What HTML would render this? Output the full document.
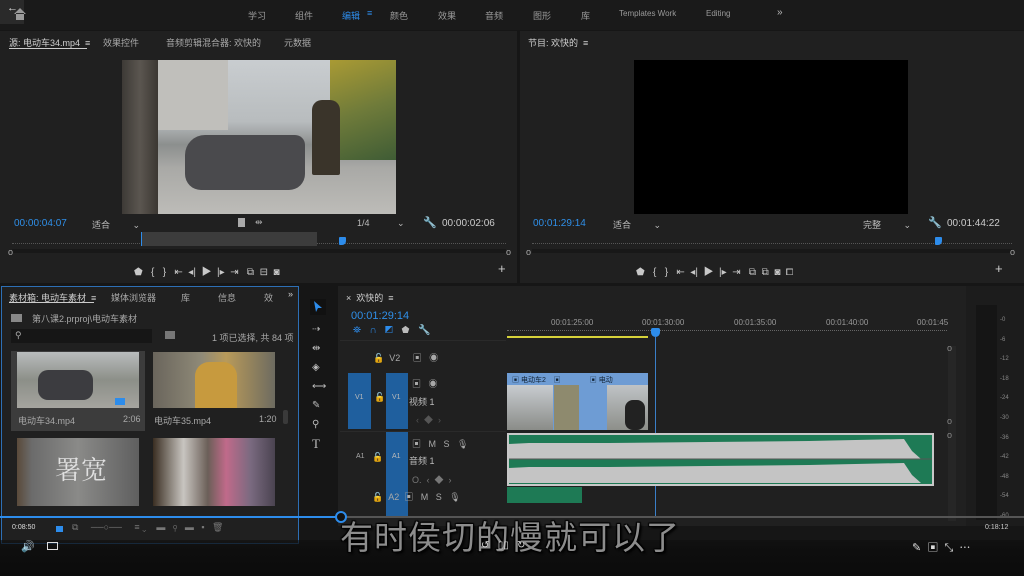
<!DOCTYPE html>
<html><head><meta charset="utf-8"><style>
*{margin:0;padding:0;box-sizing:border-box}
body{width:1024px;height:576px;overflow:hidden;background:#161616;font-family:"Liberation Sans","Noto Sans CJK SC",sans-serif;color:#a8a8a8;position:relative;font-size:9px}
.a{position:absolute}
.t{position:absolute;white-space:nowrap}
.panel{position:absolute;background:#202020}
.tc{color:#2f8fe8;font-size:10px}
</style></head><body>
<!-- top bar -->
<div class="a" style="left:0;top:0;width:1024px;height:30px;background:#1a1a1a"></div>
<div class="a" style="left:0;top:0;width:24px;height:24px;background:#2a2a2a"></div>
<div class="t" style="left:7px;top:2px;color:#ddd;font-size:11px">←</div>
<svg class="a" style="left:12px;top:7px" width="16" height="14"><path d="M2 7 L8 1 L14 7 M4 6 V13 H12 V6" fill="#9a9a9a"/></svg>
<div class="t" style="left:248px;top:9px;color:#9a9a9a">学习</div>
<div class="t" style="left:295px;top:9px;color:#9a9a9a">组件</div>
<div class="t" style="left:342px;top:9px;color:#2d8ceb">编辑</div>
<div class="t" style="left:367px;top:8px;color:#2d8ceb">≡</div>
<div class="t" style="left:390px;top:9px;color:#9a9a9a">颜色</div>
<div class="t" style="left:438px;top:9px;color:#9a9a9a">效果</div>
<div class="t" style="left:485px;top:9px;color:#9a9a9a">音频</div>
<div class="t" style="left:533px;top:9px;color:#9a9a9a">图形</div>
<div class="t" style="left:581px;top:9px;color:#9a9a9a">库</div>
<div class="t" style="left:619px;top:9px;color:#9a9a9a;font-size:8px">Templates Work</div>
<div class="t" style="left:706px;top:9px;color:#9a9a9a;font-size:8px">Editing</div>
<div class="t" style="left:777px;top:7px;color:#bbb;font-size:10px">»</div>

<!-- source panel -->
<div class="panel" style="left:0;top:31px;width:517px;height:252px"></div>
<div class="t" style="left:9px;top:36px;color:#d0d0d0">源: 电动车34.mp4 &nbsp;≡</div>
<div class="a" style="left:9px;top:48px;width:78px;height:1px;background:#ccc"></div>
<div class="t" style="left:103px;top:36px">效果控件</div>
<div class="t" style="left:166px;top:36px">音频剪辑混合器: 欢快的</div>
<div class="t" style="left:284px;top:36px">元数据</div>
<div class="a" style="left:122px;top:60px;width:274px;height:154px;background:linear-gradient(180deg,#c9cdd0 0%,#b8bcbe 40%,#8c8f8e 55%,#a9a9a6 70%,#bdbcb8 100%)"></div>
<div class="a" style="left:122px;top:60px;width:36px;height:154px;background:linear-gradient(90deg,#3d3a36,#5b5650,#3b3732)"></div>
<div class="a" style="left:158px;top:60px;width:70px;height:70px;background:#c0bfbb"></div>
<div class="a" style="left:330px;top:60px;width:66px;height:100px;background:linear-gradient(160deg,#a99a34,#6f7b3a,#3f5c35)"></div>
<div class="a" style="left:185px;top:135px;width:120px;height:55px;background:#4a4a4d;border-radius:20px 10px 16px 16px"></div>
<div class="a" style="left:312px;top:100px;width:28px;height:75px;background:#3a342a;border-radius:10px 10px 2px 2px"></div>
<div class="t tc" style="left:14px;top:218px">00:00:04:07</div>
<div class="t" style="left:92px;top:218px;color:#bbb">适合 &nbsp; &nbsp; &nbsp; &nbsp; ⌄</div>
<div class="a" style="left:238px;top:218px;width:7px;height:9px;background:#aaa"></div>
<div class="t" style="left:255px;top:217px">⇹</div>
<div class="t" style="left:357px;top:218px;color:#bbb">1/4 &nbsp; &nbsp; &nbsp; &nbsp; &nbsp; ⌄</div>
<div class="t" style="left:423px;top:216px;color:#ddd;font-size:11px">🔧</div>
<div class="t" style="left:442px;top:218px;color:#ccc;font-size:10px">00:00:02:06</div>
<div class="a" style="left:12px;top:243px;width:494px;height:1px;border-top:1px dotted #555"></div>
<div class="a" style="left:141px;top:232px;width:176px;height:14px;background:#3c3c3c;border-left:1px solid #2d8ceb"></div>
<div class="a" style="left:339px;top:237px;width:7px;height:8px;background:#2d8ceb;border-radius:1px 1px 4px 1px"></div>
<div class="a" style="left:12px;top:249px;width:494px;height:4px;background:#181818"></div>
<div class="t" style="left:8px;top:247px">o</div><div class="t" style="left:506px;top:247px">o</div>
<div class="t" style="left:134px;top:263px;color:#c8c8c8;font-size:10px">⬟ &nbsp; { &nbsp; } &nbsp; ⇤ &nbsp;◂| &nbsp;▶ &nbsp;|▸ &nbsp;⇥ &nbsp; ⧉ &nbsp;⊟ &nbsp;◙</div>
<div class="t" style="left:498px;top:261px;color:#ccc;font-size:13px">+</div>

<!-- program panel -->
<div class="panel" style="left:520px;top:31px;width:504px;height:252px"></div>
<div class="t" style="left:528px;top:36px;color:#d0d0d0">节目: 欢快的 &nbsp;≡</div>
<div class="a" style="left:634px;top:60px;width:274px;height:154px;background:#000"></div>
<div class="t tc" style="left:533px;top:218px">00:01:29:14</div>
<div class="t" style="left:613px;top:218px;color:#bbb">适合 &nbsp; &nbsp; &nbsp; &nbsp; ⌄</div>
<div class="t" style="left:863px;top:218px;color:#bbb">完整 &nbsp; &nbsp; &nbsp; &nbsp; ⌄</div>
<div class="t" style="left:928px;top:216px;color:#ddd;font-size:11px">🔧</div>
<div class="t" style="left:947px;top:218px;color:#ccc;font-size:10px">00:01:44:22</div>
<div class="a" style="left:532px;top:243px;width:480px;height:1px;border-top:1px dotted #555"></div>
<div class="a" style="left:935px;top:237px;width:7px;height:8px;background:#2d8ceb;border-radius:1px 1px 4px 1px"></div>
<div class="a" style="left:532px;top:249px;width:480px;height:4px;background:#181818"></div>
<div class="t" style="left:526px;top:247px">o</div><div class="t" style="left:1010px;top:247px">o</div>
<div class="t" style="left:636px;top:263px;color:#c8c8c8;font-size:10px">⬟ &nbsp; { &nbsp; } &nbsp; ⇤ &nbsp;◂| &nbsp;▶ &nbsp;|▸ &nbsp;⇥ &nbsp; ⧉ &nbsp;⧉ &nbsp;◙ &nbsp;⧠</div>
<div class="t" style="left:995px;top:261px;color:#ccc;font-size:13px">+</div>
<div class="t" style="left:1012px;top:280px;color:#ddd;font-size:14px">›</div>

<!-- project panel -->
<div class="panel" style="left:1px;top:286px;width:298px;height:258px;border:1px solid #2d6fb5"></div>
<div class="t" style="left:9px;top:291px;color:#d0d0d0">素材箱: 电动车素材 &nbsp;≡</div>
<div class="a" style="left:9px;top:302px;width:85px;height:1px;background:#ccc"></div>
<div class="t" style="left:111px;top:291px">媒体浏览器</div>
<div class="t" style="left:181px;top:291px">库</div>
<div class="t" style="left:218px;top:291px">信息</div>
<div class="t" style="left:264px;top:291px">效</div>
<div class="t" style="left:288px;top:289px;color:#ccc">»</div>
<div class="a" style="left:11px;top:314px;width:11px;height:8px;background:#888"></div>
<div class="t" style="left:32px;top:312px">第八课2.prproj\电动车素材</div>
<div class="a" style="left:11px;top:329px;width:141px;height:14px;background:#161616"></div>
<div class="t" style="left:15px;top:330px;color:#aaa">⚲</div>
<div class="a" style="left:165px;top:331px;width:10px;height:8px;background:#777"></div>
<div class="t" style="left:212px;top:331px">1 项已选择, 共 84 项</div>
<div class="a" style="left:11px;top:351px;width:134px;height:80px;background:#3c3c3c"></div>
<div class="a" style="left:17px;top:352px;width:122px;height:56px;background:linear-gradient(180deg,#b9bcbd,#8c8f88 50%,#a5a49f)"></div>
<div class="a" style="left:38px;top:370px;width:55px;height:30px;background:#3c3c40;border-radius:10px"></div>
<div class="a" style="left:115px;top:398px;width:10px;height:7px;background:#2d8ceb"></div>
<div class="t" style="left:18px;top:414px">电动车34.mp4</div><div class="t" style="left:123px;top:414px">2:06</div>
<div class="a" style="left:153px;top:352px;width:122px;height:56px;background:linear-gradient(90deg,#6a655c,#8f8a78 40%,#b89a5a 60%,#6d6b60)"></div>
<div class="a" style="left:195px;top:362px;width:42px;height:46px;background:#c79a3e;border-radius:14px 14px 0 0"></div>
<div class="t" style="left:154px;top:414px">电动车35.mp4</div><div class="t" style="left:259px;top:414px">1:20</div>
<div class="a" style="left:283px;top:410px;width:5px;height:14px;background:#3a3a3a;border-radius:2px"></div>
<div class="a" style="left:17px;top:438px;width:122px;height:68px;background:linear-gradient(90deg,#5a4a3a 0,#6b6b6b 12%,#8a8a88 50%,#5f5f5f)"></div>
<div class="t" style="left:55px;top:450px;font-size:26px;color:#e0e0e0;font-family:'Noto Serif CJK SC',serif">署宽</div>
<div class="a" style="left:153px;top:438px;width:122px;height:68px;background:linear-gradient(90deg,#3a2e22,#c8c5c0 25%,#6b5f58 45%,#c06a8a 60%,#7a6a80 80%,#4a4350)"></div>
<div class="t" style="left:12px;top:524px;color:#ddd;font-size:7px">0:08:50</div>
<div class="a" style="left:56px;top:526px;width:7px;height:6px;background:#2d8ceb"></div>
<div class="t" style="left:72px;top:522px;color:#777">⧉ &nbsp; &nbsp; ──○── &nbsp; &nbsp; ≡ ⌄ &nbsp; &nbsp;▬ &nbsp; ⚲ &nbsp; ▬ &nbsp; ▪ &nbsp; 🗑</div>

<!-- tools -->
<div class="a" style="left:310px;top:299px;width:16px;height:16px;background:#111"></div>
<svg class="a" style="left:313px;top:301px" width="10" height="12"><path d="M1 0 L9 7 L5 7 L3 11 Z" fill="#2d8ceb"/></svg>
<div class="t" style="left:312px;top:320px;color:#bbb;font-size:10px;line-height:19px">⇢<br>⇹<br>◈<br>⟷<br>✎<br>⚲<br><span style="font-family:'Liberation Serif';font-size:13px">T</span></div>

<!-- timeline -->
<div class="panel" style="left:338px;top:286px;width:628px;height:240px"></div>
<div class="t" style="left:346px;top:291px;color:#d0d0d0">× &nbsp;欢快的 &nbsp;≡</div>
<div class="t tc" style="left:351px;top:310px;font-size:11px">00:01:29:14</div>
<div class="t" style="left:353px;top:325px;color:#2d8ceb;font-size:10px">⛯ &nbsp; ∩ &nbsp; ◩ &nbsp; <span style="color:#bbb">⬟ &nbsp; 🔧</span></div>
<div class="t" style="left:551px;top:318px;color:#999;font-size:8px">00:01:25:00</div>
<div class="t" style="left:642px;top:318px;color:#999;font-size:8px">00:01:30:00</div>
<div class="t" style="left:734px;top:318px;color:#999;font-size:8px">00:01:35:00</div>
<div class="t" style="left:826px;top:318px;color:#999;font-size:8px">00:01:40:00</div>
<div class="t" style="left:917px;top:318px;color:#999;font-size:8px">00:01:45</div>
<div class="a" style="left:507px;top:330px;width:440px;height:3px;border-top:1px dotted #666"></div>
<div class="a" style="left:507px;top:336px;width:141px;height:2px;background:#d6d23a"></div>
<div class="a" style="left:651px;top:328px;width:9px;height:9px;background:#2d8ceb;border-radius:2px 2px 5px 5px"></div>
<div class="a" style="left:655px;top:336px;width:1px;height:182px;background:#3a7fc8"></div>
<div class="a" style="left:340px;top:340px;width:166px;height:1px;background:#2a2a2a"></div>
<div class="t" style="left:373px;top:351px">🔓 &nbsp;V2 &nbsp; &nbsp; ▣ &nbsp; ◉</div>
<div class="a" style="left:348px;top:373px;width:23px;height:56px;background:#1f5f9e"></div>
<div class="t" style="left:355px;top:394px;color:#bbb;font-size:7px">V1</div>
<div class="a" style="left:386px;top:373px;width:22px;height:56px;background:#1f5f9e"></div>
<div class="t" style="left:392px;top:394px;color:#bbb;font-size:7px">V1</div>
<div class="t" style="left:374px;top:392px">🔓</div>
<div class="t" style="left:412px;top:377px">▣ &nbsp; ◉</div>
<div class="t" style="left:409px;top:395px;color:#bbb">视频 1</div>
<div class="t" style="left:416px;top:413px;color:#555">‹ &nbsp;◆ &nbsp;›</div>
<div class="a" style="left:507px;top:373px;width:141px;height:57px;background:#6e9cd4"></div>
<div class="t" style="left:512px;top:375px;color:#123;font-size:7px">▣ 电动车2 &nbsp; &nbsp;▣ &nbsp; &nbsp; &nbsp; &nbsp; &nbsp; &nbsp; &nbsp; ▣ 电动</div>
<div class="a" style="left:507px;top:385px;width:46px;height:45px;background:linear-gradient(180deg,#c8ccd0,#8a8c88)"></div>
<div class="a" style="left:554px;top:385px;width:25px;height:45px;background:#8e8a6e"></div>
<div class="a" style="left:607px;top:385px;width:41px;height:45px;background:linear-gradient(180deg,#bfc3c6,#8d8f8a)"></div>
<div class="a" style="left:625px;top:400px;width:20px;height:30px;background:#222;border-radius:8px"></div>
<div class="a" style="left:340px;top:431px;width:166px;height:1px;background:#2a2a2a"></div>
<div class="a" style="left:386px;top:432px;width:22px;height:84px;background:#1f5f9e"></div>
<div class="t" style="left:392px;top:453px;color:#bbb;font-size:7px">A1</div>
<div class="t" style="left:356px;top:453px;font-size:7px">A1</div>
<div class="t" style="left:372px;top:452px">🔓</div>
<div class="t" style="left:412px;top:437px">▣ &nbsp; M &nbsp; S &nbsp; 🎙</div>
<div class="t" style="left:409px;top:454px;color:#bbb">音频 1</div>
<div class="t" style="left:412px;top:473px;color:#777">O. &nbsp;‹ &nbsp;◆ &nbsp;›</div>
<div class="t" style="left:372px;top:490px">🔓 &nbsp;A2 &nbsp;▣ &nbsp; M &nbsp; S &nbsp; 🎙</div>
<div class="a" style="left:507px;top:433px;width:427px;height:53px;background:#1e7a55;border:2px solid #c8c8c8"></div>
<svg class="a" style="left:509px;top:435px" width="423" height="49"><path d="M0 24 L0 9 L20 8 L100 8 L200 7 L300 6 L395 4 L403 16 L412 24 Z M0 48 L0 33 L20 32 L100 32 L200 31 L300 30 L395 28 L403 40 L412 48 Z" fill="#c4c4c4"/><line x1="0" y1="24" x2="423" y2="24" stroke="#555"/></svg>
<div class="a" style="left:507px;top:487px;width:75px;height:16px;background:#1e7a55"></div>
<div class="a" style="left:948px;top:346px;width:8px;height:175px;background:#262626"></div>
<div class="t" style="left:947px;top:343px;color:#888">o</div>
<div class="t" style="left:947px;top:416px;color:#888">o</div>
<div class="t" style="left:947px;top:430px;color:#888">o</div>

<!-- meters -->
<div class="a" style="left:966px;top:286px;width:58px;height:240px;background:#1c1c1c"></div>
<div class="a" style="left:976px;top:305px;width:21px;height:215px;background:#151515"></div>
<div class="t" style="left:1000px;top:311px;font-size:6px;color:#888;line-height:19.6px">-0<br>-6<br>-12<br>-18<br>-24<br>-30<br>-36<br>-42<br>-48<br>-54<br>-60</div>

<!-- player overlay -->
<div class="a" style="left:0;top:540px;width:1024px;height:36px;background:linear-gradient(180deg,rgba(14,14,14,.6),#0e0e0e 30%,#0b0b0b)"></div>
<div class="a" style="left:0;top:516px;width:1024px;height:2px;background:#555"></div>
<div class="a" style="left:0;top:516px;width:341px;height:2px;background:#2d8ceb"></div>
<div class="a" style="left:335px;top:511px;width:12px;height:12px;border:2px solid #2d8ceb;border-radius:50%;background:#111"></div>
<div class="t" style="left:985px;top:524px;color:#ccc;font-size:7px">0:18:12</div>
<div class="t" style="left:340px;top:511px;font-size:33px;color:#8c8c8c;font-family:'Noto Sans CJK SC',sans-serif;letter-spacing:1px;text-shadow:2px 2px 2px #000,-1px -1px 1px #000,1px -1px 1px #000,-1px 1px 1px #000">有时侯切的慢就可以了</div>
<div class="t" style="left:21px;top:540px;color:#ddd;font-size:11px">🔊</div>
<div class="a" style="left:47px;top:542px;width:11px;height:8px;border:1px solid #ddd"></div>
<div class="t" style="left:481px;top:540px;color:#ddd;font-size:10px">↺ &nbsp; ▯▯ &nbsp; ↻</div>
<div class="t" style="left:912px;top:539px;color:#ddd;font-size:11px">✎ &nbsp;▣ &nbsp;⤡ &nbsp;⋯</div>
</body></html>
